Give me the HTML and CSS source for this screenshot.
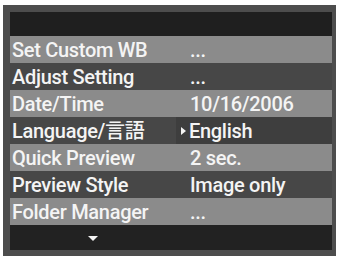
FILE: index.html
```html
<!DOCTYPE html>
<html>
<head>
<meta charset="utf-8">
<link rel="stylesheet" href="styles.css">
</head>
<body>
<div class="frame">
  <div class="menu">
    <div class="header"></div>
    <div class="row light"><div class="label">Set Custom WB</div><div class="value">...</div></div>
    <div class="row dark"><div class="label">Adjust Setting</div><div class="value">...</div></div>
    <div class="row light"><div class="label">Date/Time</div><div class="value">10/16/2006</div></div>
    <div class="row dark"><div class="label">Language/言語</div><div class="value sel"><span class="tri"></span>English</div></div>
    <div class="row light"><div class="label">Quick Preview</div><div class="value">2 sec.</div></div>
    <div class="row dark"><div class="label">Preview Style</div><div class="value">Image only</div></div>
    <div class="row light"><div class="label">Folder Manager</div><div class="value">...</div></div>
    <div class="footer"><div class="down"></div></div>
  </div>
</div>
</body>
</html>
```

FILE: styles.css
```css
html, body {
  margin: 0;
  padding: 0;
  background: #ffffff;
}
.frame {
  box-sizing: border-box;
  width: 333px;
  height: 251px;
  margin: 5px 3px 4px 3px;
  padding: 7px 4px 6px 7px;
  background: #4d4d4d;
}
.menu {
  display: flex;
  flex-direction: column;
  font-family: Roboto, "Noto Sans CJK JP", sans-serif;
  font-size: 20px;
  font-weight: 500;
  letter-spacing: -0.3px;
  color: #f4f4f4;
}
.header {
  height: 24px;
  background: #1f1f1f;
}
.row {
  height: 27px;
  display: grid;
  grid-template-columns: 166px 1fr;
  line-height: 28px;
}
.row.light {
  background: #8b8b8b;
}
.row.dark {
  background: #474747;
}
.label {
  padding-left: 2px;
  white-space: nowrap;
}
.value {
  padding-left: 14px;
  white-space: nowrap;
}
.value.sel {
  background: #3e3e3e;
  padding-left: 5px;
  display: flex;
  align-items: center;
}
.tri {
  width: 0;
  height: 0;
  border-top: 4px solid transparent;
  border-bottom: 4px solid transparent;
  border-left: 5px solid #f4f4f4;
  margin-right: 3px;
}
.footer {
  height: 25px;
  background: #222222;
  display: grid;
  grid-template-columns: 166px 1fr;
}
.down {
  justify-self: center;
  margin-top: 11px;
  width: 0;
  height: 0;
  border-left: 5px solid transparent;
  border-right: 5px solid transparent;
  border-top: 5px solid #f4f4f4;
}
```
